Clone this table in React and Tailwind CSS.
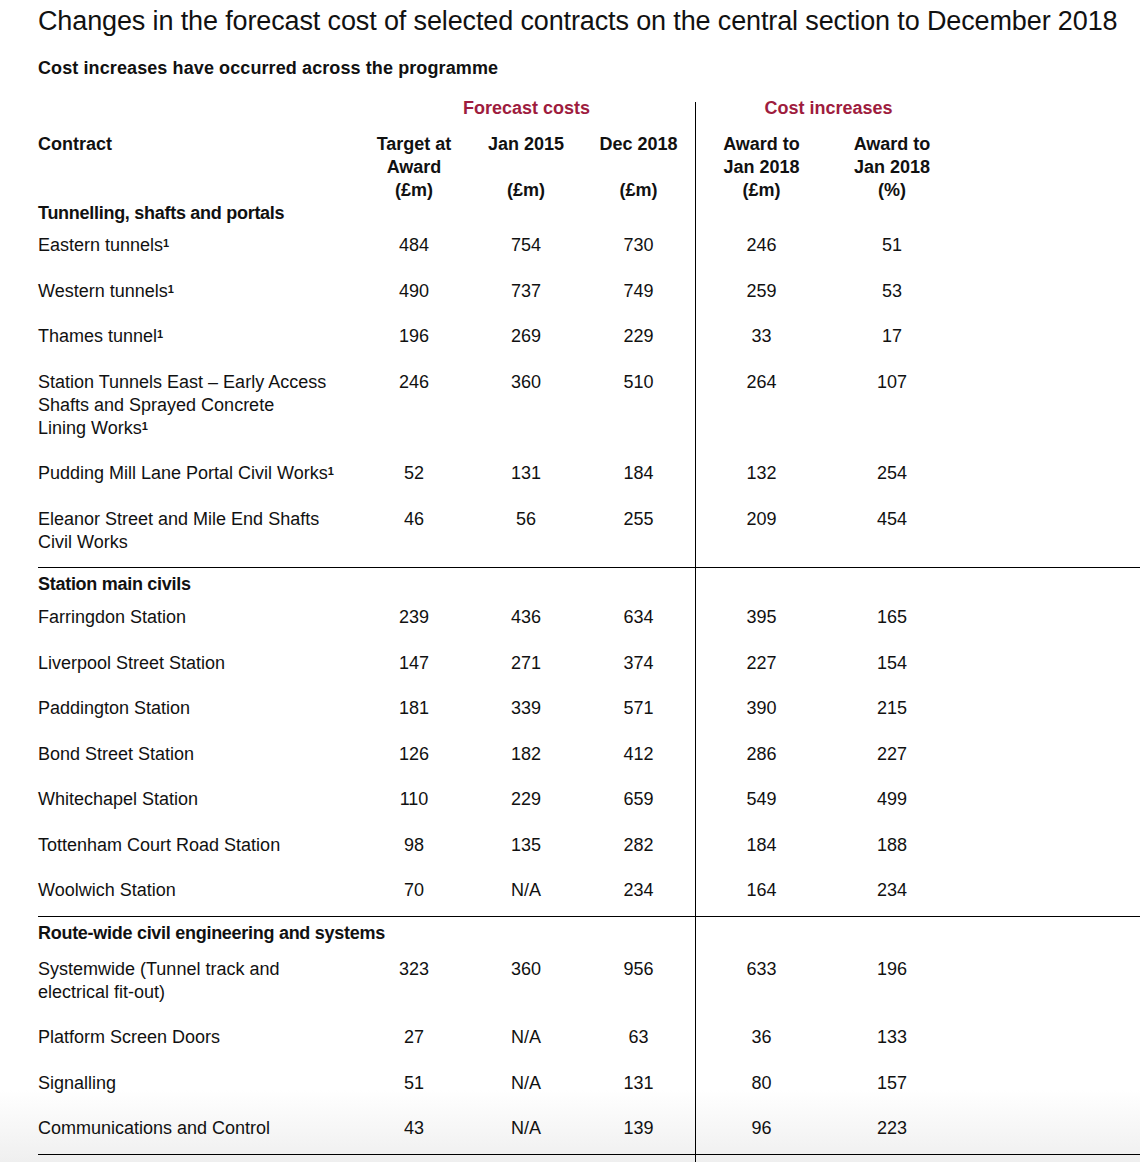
import React from "react";

const cols = "grid grid-cols-[320px_112px_112px_113px_132px_130px_1fr]";

const groups = [
  {
    title: "Tunnelling, shafts and portals",
    titlePad: "pt-0 pb-[9px]",
    rows: [
      { name: ["Eastern tunnels"], sup: true, vals: [484, 754, 730, 246, 51] },
      { name: ["Western tunnels"], sup: true, vals: [490, 737, 749, 259, 53] },
      { name: ["Thames tunnel"], sup: true, vals: [196, 269, 229, 33, 17] },
      {
        name: ["Station Tunnels East – Early Access", "Shafts and Sprayed Concrete", "Lining Works"],
        sup: true,
        vals: [246, 360, 510, 264, 107],
      },
      { name: ["Pudding Mill Lane Portal Civil Works"], sup: true, vals: [52, 131, 184, 132, 254] },
      { name: ["Eleanor Street and Mile End Shafts", "Civil Works"], vals: [46, 56, 255, 209, 454] },
    ],
  },
  {
    title: "Station main civils",
    titlePad: "pt-[5px] pb-[10px]",
    rows: [
      { name: ["Farringdon Station"], vals: [239, 436, 634, 395, 165] },
      { name: ["Liverpool Street Station"], vals: [147, 271, 374, 227, 154] },
      { name: ["Paddington Station"], vals: [181, 339, 571, 390, 215] },
      { name: ["Bond Street Station"], vals: [126, 182, 412, 286, 227] },
      { name: ["Whitechapel Station"], vals: [110, 229, 659, 549, 499] },
      { name: ["Tottenham Court Road Station"], vals: [98, 135, 282, 184, 188] },
      { name: ["Woolwich Station"], vals: [70, "N/A", 234, 164, 234] },
    ],
  },
  {
    title: "Route-wide civil engineering and systems",
    titlePad: "pt-[5px] pb-[13px]",
    rows: [
      { name: ["Systemwide (Tunnel track and", "electrical fit-out)"], vals: [323, 360, 956, 633, 196] },
      { name: ["Platform Screen Doors"], vals: [27, "N/A", 63, 36, 133] },
      { name: ["Signalling"], vals: [51, "N/A", 131, 80, 157] },
      { name: ["Communications and Control"], vals: [43, "N/A", 139, 96, 223] },
    ],
  },
];

const Sup = () => <span className="text-[11px] font-bold align-top leading-[18px]">1</span>;

const DataRow = ({ row, last }) => (
  <div className={cols}>
    <div className={last ? "pb-[13.5px]" : "pb-[22.5px]"}>
      {row.name.map((line, i) => (
        <div key={i}>
          {line}
          {row.sup && i === row.name.length - 1 && <Sup />}
        </div>
      ))}
    </div>
    <div className="text-center">{row.vals[0]}</div>
    <div className="text-center">{row.vals[1]}</div>
    <div className="text-center">{row.vals[2]}</div>
    <div className="text-center border-l border-black">{row.vals[3]}</div>
    <div className="text-center">{row.vals[4]}</div>
    <div />
  </div>
);

const GroupTitle = ({ title, pad }) => (
  <div className={cols}>
    <div className={"font-bold tracking-[-0.28px] col-span-4 " + pad}>{title}</div>
    <div className="border-l border-black col-span-3" />
  </div>
);

export default function App() {
  return (
    <div className="w-[1140px] h-[1162px] overflow-hidden pl-[38px] text-[#111] font-['Liberation_Sans',Arial,sans-serif] bg-[linear-gradient(to_bottom,#ffffff_1090px,#efefef_1162px)]">
      <h1 className="text-[27px] leading-[40px] tracking-[-0.13px] pt-[1px] whitespace-nowrap">
        Changes in the forecast cost of selected contracts on the central section to December 2018
      </h1>
      <p className="mt-[16px] text-[18px] leading-[23px] font-bold tracking-[0.1px]">
        Cost increases have occurred across the programme
      </p>

      <div className="mt-[22px] text-[18px] leading-[23px]">
        <div className={cols}>
          <div className="h-[14px]" />
          <div className="col-span-3 text-center leading-[13px] text-[#9e1c3e] font-bold">Forecast costs</div>
          <div className="col-span-2 text-center leading-[13px] text-[#9e1c3e] font-bold border-l border-black pl-[4px]">
            Cost increases
          </div>
          <div />
        </div>

        <div className={cols + " font-bold"}>
          <div className="pt-[17px]">Contract</div>
          <div className="pt-[17px] text-center">
            <div>Target at</div>
            <div>Award</div>
            <div>(£m)</div>
          </div>
          <div className="pt-[17px] text-center">
            <div>Jan 2015</div>
            <div>&nbsp;</div>
            <div>(£m)</div>
          </div>
          <div className="pt-[17px] text-center">
            <div>Dec 2018</div>
            <div>&nbsp;</div>
            <div>(£m)</div>
          </div>
          <div className="pt-[17px] text-center border-l border-black">
            <div>Award to</div>
            <div>Jan 2018</div>
            <div>(£m)</div>
          </div>
          <div className="pt-[17px] text-center">
            <div>Award to</div>
            <div>Jan 2018</div>
            <div>(%)</div>
          </div>
          <div />
        </div>

        {groups.map((g, gi) => (
          <div key={gi}>
            <GroupTitle title={g.title} pad={g.titlePad} />
            {g.rows.map((r, ri) => (
              <DataRow key={ri} row={r} last={ri === g.rows.length - 1} />
            ))}
            <div className="h-px bg-black" />
          </div>
        ))}

        <div className={cols}>
          <div className="h-[20px] col-span-4" />
          <div className="border-l border-black col-span-3" />
        </div>
      </div>
    </div>
  );
}
